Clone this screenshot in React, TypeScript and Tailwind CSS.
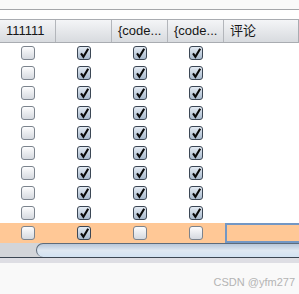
import React from 'react'

const rows = [
  [false, true, true, true],
  [false, true, true, true],
  [false, true, true, true],
  [false, true, true, true],
  [false, true, true, true],
  [false, true, true, true],
  [false, true, true, true],
  [false, true, true, true],
  [false, true, true, true],
  [false, true, false, false],
]

const headers = ['111111', '', '{code...', '{code...', '评论']

function Box({ checked }: { checked: boolean }) {
  if (!checked) {
    return (
      <div className="w-[14px] h-[14px] rounded-[3px] border border-[#7b838d] bg-gradient-to-b from-[#fdfdfe] to-[#d5d9df]" />
    )
  }
  return (
    <div className="w-[14px] h-[14px] rounded-[3px] border border-[#3b4654] bg-gradient-to-b from-[#e4ebf3] to-[#a9bacd] flex items-center justify-center">
      <svg width="11" height="11" viewBox="0 0 11 11">
        <path d="M2 5.4 L4.4 8.8 L9.2 0.8" fill="none" stroke="#0a0a0a" strokeWidth="2.1" strokeLinecap="butt" strokeLinejoin="miter" />
      </svg>
    </div>
  )
}

export default function App() {
  return (
    <div className="w-[299px] h-[294px] bg-[#f9f9f9] flex flex-col overflow-hidden font-['Liberation_Sans','Noto_Sans_CJK_SC',sans-serif]">
      <div className="h-[9px]" />
      <div className="h-px bg-[#a4a6a9]" />
      <div className="h-[9px] bg-white" />

      {/* header */}
      <div className="h-[24px] grid grid-cols-[56px_56px_56px_56px_1fr] border-y border-[#a9acb1] bg-gradient-to-b from-[#f4f5f7] to-[#d8dbdf]">
        {headers.map((h, i) => (
          <div
            key={i}
            className={`flex items-center pl-[6px] text-[13px] text-[#161616] whitespace-nowrap overflow-hidden ${i === 4 ? 'border-r border-[#a9acb1]' : 'border-r border-[#b3b6bb]'}`}
          >
            {h}
          </div>
        ))}
      </div>

      {/* rows */}
      <div className="bg-white">
        {rows.map((r, ri) => {
          const sel = ri === rows.length - 1
          return (
            <div
              key={ri}
              className={`h-[20px] grid grid-cols-[56px_56px_56px_56px_1fr] ${sel ? 'bg-[#ffc896]' : ''}`}
            >
              {r.map((c, ci) => (
                <div key={ci} className="flex items-center justify-center">
                  <Box checked={c} />
                </div>
              ))}
              <div className={sel ? 'ml-px border-2 border-r-0 border-[#7397c4]' : ''} />
            </div>
          )
        })}
      </div>

      {/* horizontal scrollbar */}
      <div className="h-[14px] flex bg-[#d3d5d9]">
        <div className="w-[36px]" />
        <div className="flex-1 rounded-l-[9px] border-t border-l border-[#5e6b7a] bg-gradient-to-b from-[#b7c6d8] via-[#dfe8f2] to-[#d2e2f2]" />
      </div>
      <div className="h-px bg-[#3c4652]" />
      <div className="h-[5px] bg-[#dedee4]" />

      <div className="flex-1 flex justify-end items-start pt-[11px] pr-[4px]">
        <span className="text-[11px] text-[#b4b4b4]">CSDN @yfm277</span>
      </div>
    </div>
  )
}
